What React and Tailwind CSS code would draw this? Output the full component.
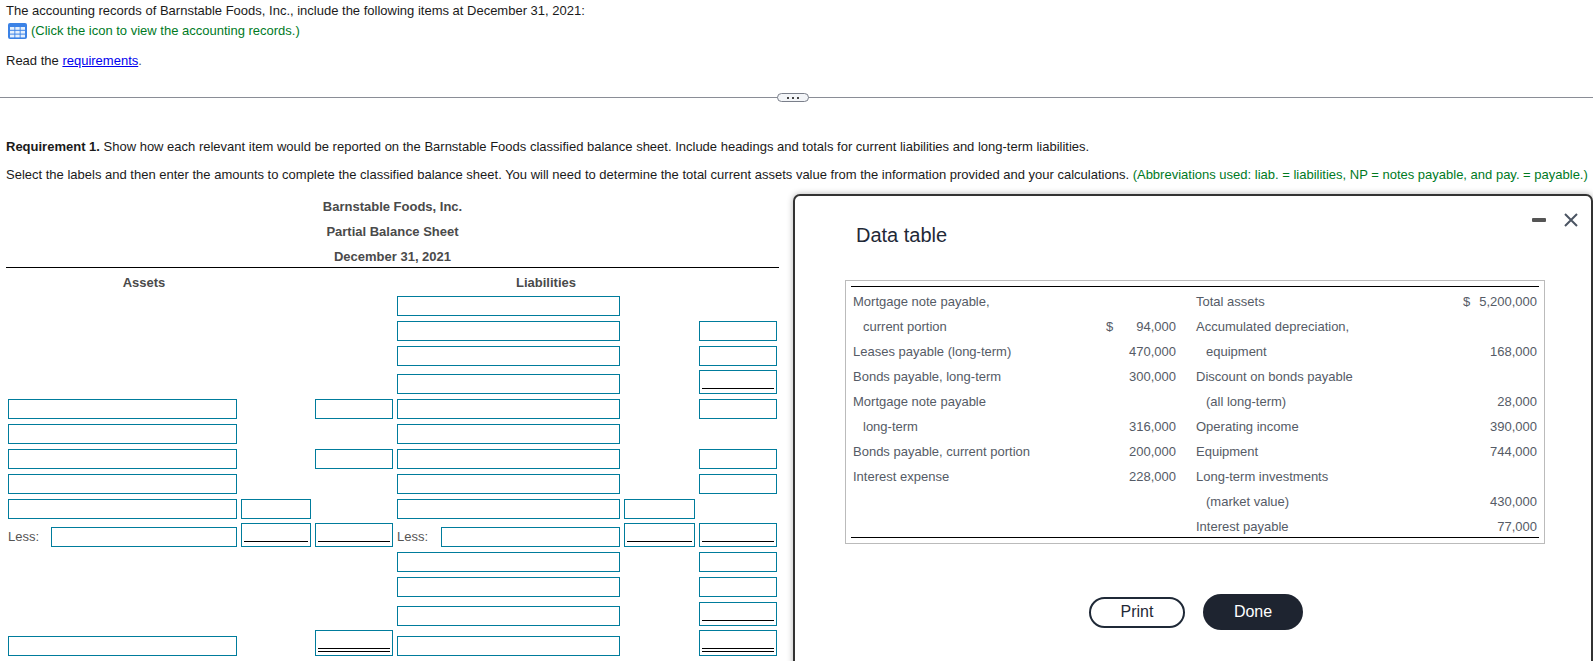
import React from "react";

const box = "block w-full h-[20px] border border-[#007c9c] bg-white outline-none";

function Cell({ kind }) {
  if (!kind) return <div />;
  if (kind === "in") return <input className={box} aria-label="amount" />;
  if (kind === "sub")
    return (
      <div className="flex h-[24px] items-end border border-[#007c9c] px-[2px] pb-[4px]">
        <input className="block h-[16px] w-full border-b border-black outline-none" aria-label="subtotal" />
      </div>
    );
  if (kind === "tot")
    return (
      <div className="flex h-[26px] items-end border border-[#007c9c] px-[2px] pb-[3px]">
        <input className="block h-[18px] w-full border-b-4 border-double border-black outline-none" aria-label="total" />
      </div>
    );
  if (kind === "less")
    return (
      <div className="flex items-center justify-between">
        <span className="text-[#555]">Less:</span>
        <input className={box + " !w-[186px]"} aria-label="label" />
      </div>
    );
  if (kind === "less2")
    return (
      <div className="flex items-center justify-between">
        <span className="text-[#555]">Less:</span>
        <input className={box + " !w-[179px]"} aria-label="label" />
      </div>
    );
  return null;
}

const rows = [
  { h: "h-[25px]", c: [null, null, null, "in", null, null] },
  { h: "h-[25px]", c: [null, null, null, "in", null, "in"] },
  { h: "h-[25px]", c: [null, null, null, "in", null, "in"] },
  { h: "h-[28px]", c: [null, null, null, "in", null, "sub"] },
  { h: "h-[25px]", c: ["in", null, "in", "in", null, "in"] },
  { h: "h-[25px]", c: ["in", null, null, "in", null, null] },
  { h: "h-[25px]", c: ["in", null, "in", "in", null, "in"] },
  { h: "h-[25px]", c: ["in", null, null, "in", null, "in"] },
  { h: "h-[25px]", c: ["in", "in", null, "in", "in", null] },
  { h: "h-[28px]", c: ["less", "sub", "sub", "less2", "sub", "sub"] },
  { h: "h-[25px]", c: [null, null, null, "in", null, "in"] },
  { h: "h-[25px]", c: [null, null, null, "in", null, "in"] },
  { h: "h-[29px]", c: [null, null, null, "in", null, "sub"] },
  { h: "h-[30px]", c: ["in", null, "tot", "in", null, "tot"] },
];

const table = [
  ["Mortgage note payable,", 0, "", "", "Total assets", 0, "$", "5,200,000"],
  ["current portion", 1, "$", "94,000", "Accumulated depreciation,", 0, "", ""],
  ["Leases payable (long-term)", 0, "", "470,000", "equipment", 1, "", "168,000"],
  ["Bonds payable, long-term", 0, "", "300,000", "Discount on bonds payable", 0, "", ""],
  ["Mortgage note payable", 0, "", "", "(all long-term)", 1, "", "28,000"],
  ["long-term", 1, "", "316,000", "Operating income", 0, "", "390,000"],
  ["Bonds payable, current portion", 0, "", "200,000", "Equipment", 0, "", "744,000"],
  ["Interest expense", 0, "", "228,000", "Long-term investments", 0, "", ""],
  ["", 0, "", "", "(market value)", 1, "", "430,000"],
  ["", 0, "", "", "Interest payable", 0, "", "77,000"],
];

export default function App() {
  return (
    <div className="relative h-[661px] w-[1593px] overflow-hidden bg-white font-['Liberation_Sans',Arial,sans-serif] text-[13px] text-[#1a1a1a]">
      <div className="pl-[6px] pt-[1px]">
        <p className="h-[20px] leading-[20px]">
          The accounting records of Barnstable Foods, Inc., include the following items at December 31, 2021:
        </p>
        <p className="flex h-[20px] items-center pl-[2px] leading-[20px] text-[#007a1f]">
          <svg width="19" height="16" viewBox="0 0 19 16" className="mr-[4px] shrink-0">
            <rect width="19" height="16" rx="2" fill="#3b82e6" />
            <rect x="2" y="4" width="4.4" height="2.8" fill="#e6f0fc" />
            <rect x="7.3" y="4" width="4.4" height="2.8" fill="#e6f0fc" />
            <rect x="12.6" y="4" width="4.4" height="2.8" fill="#e6f0fc" />
            <rect x="2" y="7.8" width="4.4" height="2.8" fill="#e6f0fc" />
            <rect x="7.3" y="7.8" width="4.4" height="2.8" fill="#e6f0fc" />
            <rect x="12.6" y="7.8" width="4.4" height="2.8" fill="#e6f0fc" />
            <rect x="2" y="11.6" width="4.4" height="2.8" fill="#e6f0fc" />
            <rect x="7.3" y="11.6" width="4.4" height="2.8" fill="#e6f0fc" />
            <rect x="12.6" y="11.6" width="4.4" height="2.8" fill="#e6f0fc" />
          </svg>
          (Click the icon to view the accounting records.)
        </p>
        <p className="mt-[10px] h-[20px] leading-[20px]">
          Read the <a className="text-[#0000ee] underline" href="#req">requirements</a>
          <span className="text-[#555]">.</span>
        </p>
      </div>

      <div className="relative mt-[26px] h-px bg-[#8a8d96]">
        <button className="absolute left-[777px] top-[-4px] flex h-[9px] w-[32px] items-center justify-center gap-[3px] rounded-full border border-[#7a7f8a] bg-[#f3f5f8]" aria-label="more">
          <span className="h-[2px] w-[2px] bg-[#444]" />
          <span className="h-[2px] w-[2px] bg-[#444]" />
          <span className="h-[2px] w-[2px] bg-[#444]" />
        </button>
      </div>

      <div className="pl-[6px] pt-[39px]">
        <p className="h-[20px] whitespace-nowrap leading-[20px]">
          <b>Requirement 1.</b> Show how each relevant item would be reported on the Barnstable Foods classified balance sheet. Include headings and totals for current liabilities and long-term liabilities.
        </p>
        <p className="mt-[8px] h-[20px] whitespace-nowrap leading-[20px]">
          Select the labels and then enter the amounts to complete the classified balance sheet. You will need to determine the total current assets value from the information provided and your calculations.{" "}
          <span className="text-[#007a1f]">(Abbreviations used: liab. = liabilities, NP = notes payable, and pay. = payable.)</span>
        </p>
      </div>

      <div className="ml-[6px] mt-[9px] w-[773px]">
        <div className="border-b border-black text-center font-bold text-[#4a4a4a]">
          <div className="h-[25px] leading-[25px]">Barnstable Foods, Inc.</div>
          <div className="h-[25px] leading-[25px]">Partial Balance Sheet</div>
          <div className="h-[23px] leading-[25px]">December 31, 2021</div>
        </div>
        <div className="ml-[2px] grid h-[23px] grid-cols-[229px_70px_78px_223px_71px_78px] gap-x-[4px] pt-[6px] text-center font-bold leading-[18px] text-[#4a4a4a]">
          <div className="col-span-2 pr-[31px]">Assets</div>
          <div />
          <div className="col-span-2">Liabilities</div>
        </div>
        <div className="ml-[2px]">
          {rows.map((r, i) => (
            <div key={i} className={"grid grid-cols-[229px_70px_78px_223px_71px_78px] items-end gap-x-[4px] " + r.h}>
              {r.c.map((k, j) => (
                <Cell key={j} kind={k} />
              ))}
            </div>
          ))}
        </div>
      </div>

      <div className="absolute left-[793px] top-[194px] h-[480px] w-[800px] rounded-t-[7px] border-2 border-[#333] bg-white pl-[50px] shadow-[0_0_6px_rgba(0,0,0,0.3)]">
        <div className="absolute right-[13px] top-[17px] flex items-center gap-[18px]">
          <span className="h-[4px] w-[14px] rounded-[1px] bg-[#555]" />
          <svg width="14" height="14" viewBox="0 0 14 14" fill="none" stroke="#4b5563" strokeWidth="2">
            <path d="M1 1 13 13M13 1 1 13" />
          </svg>
        </div>
        <h2 className="pl-[11px] pt-[25px] text-[20px] font-normal leading-[28px] text-[#1f2937]">Data table</h2>
        <div className="mt-[31px] w-[700px] border border-[#bbb] px-[5px] py-[5px] text-[#555b66]">
          <div className="border-y border-black">
            {table.map((t, i) => (
              <div key={i} className="grid h-[25px] grid-cols-[255px_70px_287px_74px] pt-[4px] leading-[21px]">
                <div className={t[1] ? "pl-[12px]" : "pl-[2px]"}>{t[0]}</div>
                <div className="flex justify-between">
                  <span>{t[2]}</span>
                  <span>{t[3]}</span>
                </div>
                <div className={t[5] ? "pl-[30px]" : "pl-[20px]"}>{t[4]}</div>
                <div className="flex justify-between">
                  <span>{t[6]}</span>
                  <span>{t[7]}</span>
                </div>
              </div>
            ))}
          </div>
        </div>
        <div className="mt-[50px] flex items-center">
          <button className="ml-[244px] h-[31px] w-[96px] rounded-full border-2 border-[#1f2937] text-[16px] text-[#1f2937]">Print</button>
          <button className="ml-[18px] h-[36px] w-[100px] rounded-full bg-[#1e2430] text-[16px] text-white">Done</button>
        </div>
      </div>
    </div>
  );
}
